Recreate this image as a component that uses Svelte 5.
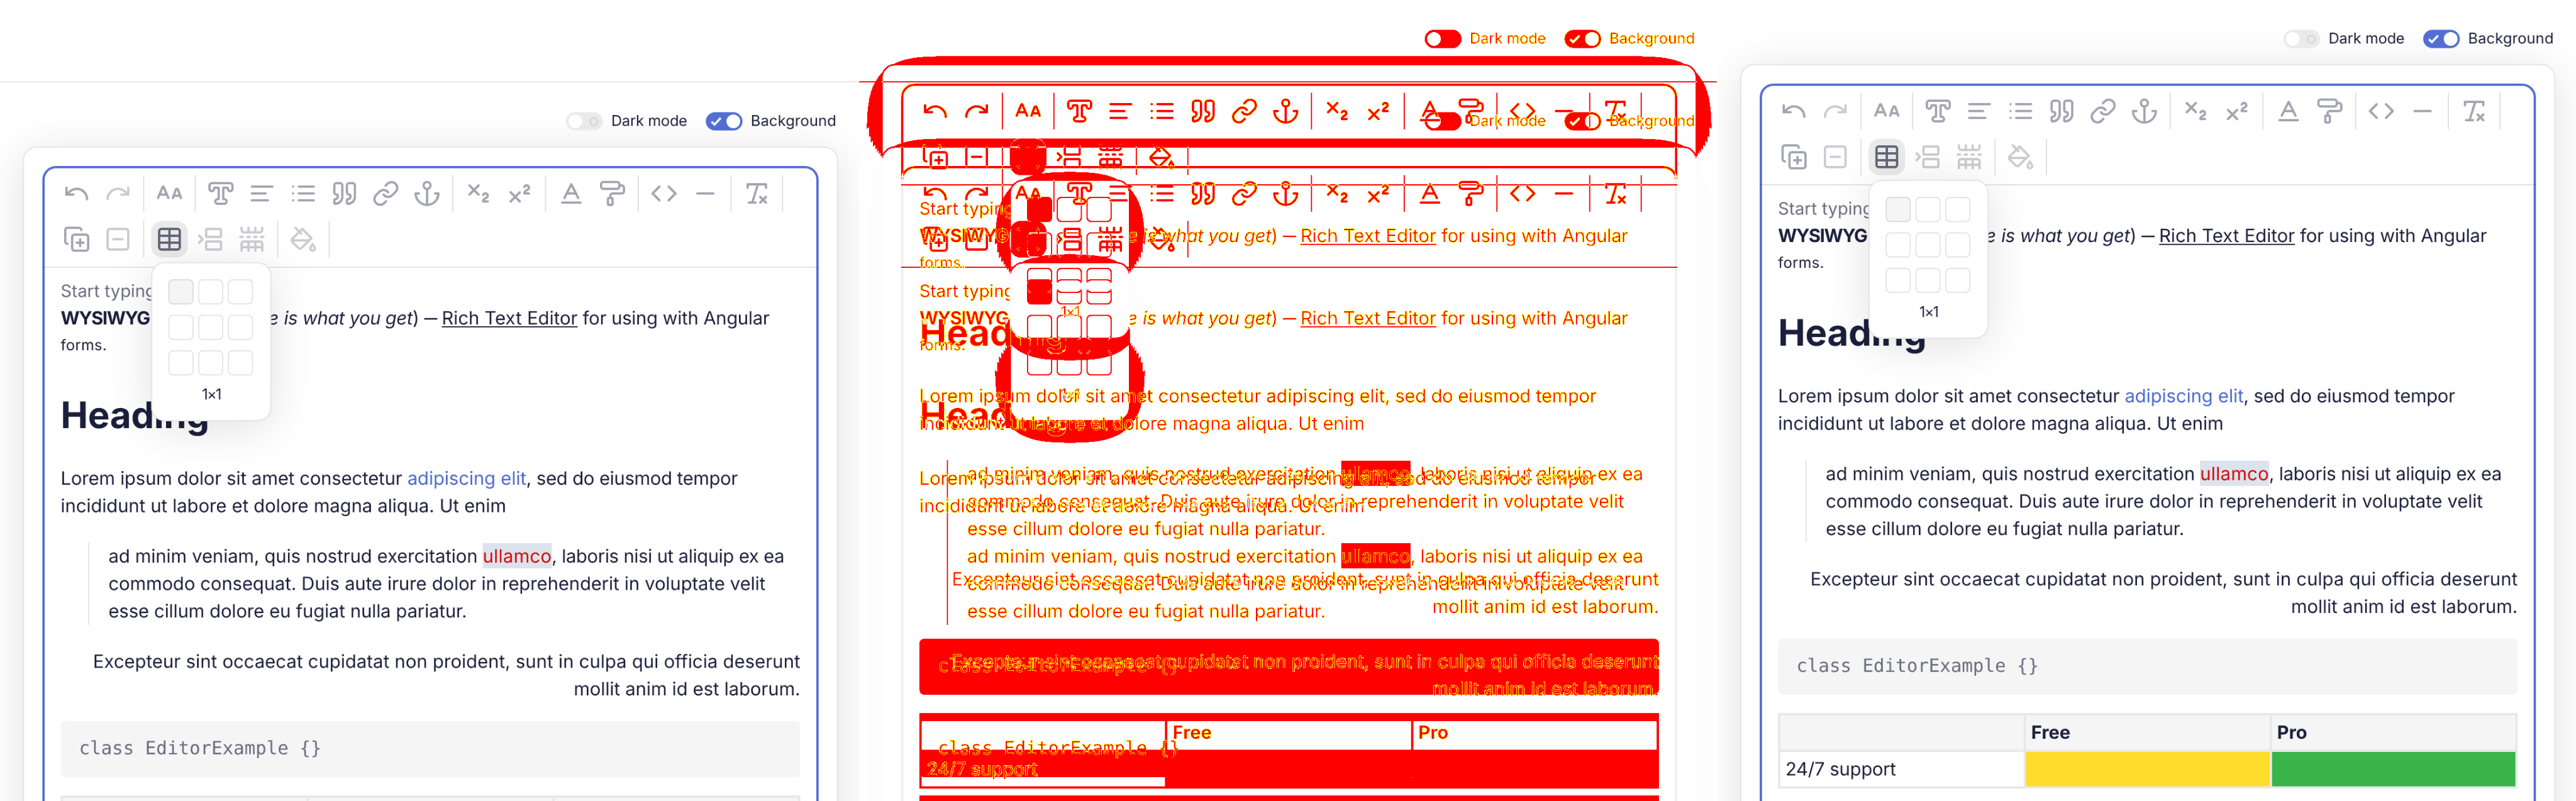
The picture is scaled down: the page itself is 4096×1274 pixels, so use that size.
<script>
  const icons = {
    undo: ['M3 7v6h6', 'M21 17a9 9 0 0 0-9-9 9 9 0 0 0-6 2.3L3 13'],
    redo: ['M21 7v6h-6', 'M3 17a9 9 0 0 1 9-9 9 9 0 0 1 6 2.3l3 2.7'],
    size: ['m15 16 2.536-7.328a1.02 1.02 1 0 1 1.928 0L22 16', 'M15.697 14h5.606', 'm2 16 4.039-9.69a.5.5 0 0 1 .923 0L11 16', 'M3.304 13h6.392'],
    type: ['M14 16.5a.5.5 0 0 0 .5.5h.5a2 2 0 0 1 0 4H9a2 2 0 0 1 0-4h.5a.5.5 0 0 0 .5-.5v-9a.5.5 0 0 0-.5-.5h-3a.5.5 0 0 0-.5.5V8a2 2 0 0 1-4 0V5a2 2 0 0 1 2-2h16a2 2 0 0 1 2 2v3a2 2 0 0 1-4 0v-.5a.5.5 0 0 0-.5-.5h-3a.5.5 0 0 0-.5.5Z'],
    align: ['M21 6H3', 'M15 12H3', 'M17 18H3'],
    list: ['M3 12h.01', 'M3 18h.01', 'M3 6h.01', 'M8 12h13', 'M8 18h13', 'M8 6h13'],
    quote: [
      'M16 3a2 2 0 0 0-2 2v6a2 2 0 0 0 2 2 1 1 0 0 1 1 1v1a2 2 0 0 1-2 2 1 1 0 0 0-1 1v2a1 1 0 0 0 1 1 6 6 0 0 0 6-6V5a2 2 0 0 0-2-2z',
      'M5 3a2 2 0 0 0-2 2v6a2 2 0 0 0 2 2 1 1 0 0 1 1 1v1a2 2 0 0 1-2 2 1 1 0 0 0-1 1v2a1 1 0 0 0 1 1 6 6 0 0 0 6-6V5a2 2 0 0 0-2-2z'
    ],
    link: ['M10 13a5 5 0 0 0 7.54.54l3-3a5 5 0 0 0-7.07-7.07l-1.72 1.71', 'M14 11a5 5 0 0 0-7.54-.54l-3 3a5 5 0 0 0 7.07 7.07l1.71-1.71'],
    anchor: ['M12 22V8', 'M5 12H2a10 10 0 0 0 20 0h-3', 'M15 5a3 3 0 1 1-6 0a3 3 0 0 1 6 0'],
    sub: ['m4 5 8 8', 'm12 5-8 8', 'M20 19h-4c0-1.5.44-2 1.5-2.5S20 15.33 20 14c0-.47-.17-.93-.48-1.29a2.11 2.11 0 0 0-2.62-.44c-.42.24-.74.62-.9 1.07'],
    sup: ['m4 19 8-8', 'm12 19-8-8', 'M20 12h-4c0-1.5.442-2 1.5-2.5S20 8.334 20 7.002c0-.472-.17-.93-.484-1.29a2.105 2.105 0 0 0-2.617-.436c-.42.239-.738.614-.899 1.06'],
    color: ['M4 20h16', 'm6 16 6-12 6 12', 'M8 12h8'],
    roller: ['M4 2h12a2 2 0 0 1 2 2v2a2 2 0 0 1-2 2H4a2 2 0 0 1-2-2V4a2 2 0 0 1 2-2Z', 'M10 16v-2a2 2 0 0 1 2-2h8a2 2 0 0 0 2-2V7a2 2 0 0 0-2-2h-2', 'M9 16h2a1 1 0 0 1 1 1v4a1 1 0 0 1-1 1H9a1 1 0 0 1-1-1v-4a1 1 0 0 1 1-1Z'],
    code: ['m16 18 6-6-6-6', 'm8 6-6 6 6 6'],
    rule: ['M5 12h14'],
    clear: ['M4 7V4h16v3', 'M5 20h6', 'M13 4 8 20', 'm15 15 5 5', 'm20 15-5 5'],
    copy: ['M15 12v6', 'M12 15h6', 'M10 8h10a2 2 0 0 1 2 2v10a2 2 0 0 1-2 2H10a2 2 0 0 1-2-2V10a2 2 0 0 1 2-2Z', 'M4 16c-1.1 0-2-.9-2-2V4c0-1.1.9-2 2-2h10c1.1 0 2 .9 2 2'],
    collapse: ['M5 3h14a2 2 0 0 1 2 2v14a2 2 0 0 1-2 2H5a2 2 0 0 1-2-2V5a2 2 0 0 1 2-2Z', 'M8 12h8'],
    table: ['M12 3v18', 'M5 3h14a2 2 0 0 1 2 2v14a2 2 0 0 1-2 2H5a2 2 0 0 1-2-2V5a2 2 0 0 1 2-2Z', 'M3 9h18', 'M3 15h18'],
    between: ['M9 3h11a1 1 0 0 1 1 1v5a1 1 0 0 1-1 1H9a1 1 0 0 1-1-1V4a1 1 0 0 1 1-1Z', 'm2 9 3 3-3 3', 'M9 14h11a1 1 0 0 1 1 1v5a1 1 0 0 1-1 1H9a1 1 0 0 1-1-1v-5a1 1 0 0 1 1-1Z'],
    split: ['M14 10h2', 'M15 22v-8', 'M15 2v4', 'M2 10h2', 'M20 10h2', 'M3 19h18', 'M3 22v-6a2 2 135 0 1 2-2h14a2 2 45 0 1 2 2v6', 'M3 2v2a2 2 45 0 0 2 2h14a2 2 135 0 0 2-2V2', 'M8 10h2', 'M9 22v-8', 'M9 2v4'],
    bucket: ['m19 11-8-8-8.6 8.6a2 2 0 0 0 0 2.8l5.2 5.2c.8.8 2 .8 2.8 0L19 11Z', 'm5 2 5 5', 'M2 13h15', 'M22 20a2 2 0 1 1-4 0c0-1.6 1.7-2.4 2-4 .3 1.6 2 2.4 2 4Z']
  };

  const toolbar = [
    [['undo', 'redo'], ['size'], ['type', 'align', 'list', 'quote', 'link', 'anchor'], ['sub', 'sup'], ['color', 'roller'], ['code', 'rule'], ['clear']],
    [['copy', 'collapse'], ['table', 'between', 'split'], ['bucket']]
  ];
  const disabled = ['redo', 'collapse', 'between', 'split', 'bucket'];
</script>

{#snippet page(scrolled)}
  <div class="page" class:scrolled>
    <div class="header"></div>
    <div class="settings">
      <div class="option">
        <span class="switch"><span class="knob"></span><span class="ring"></span></span>
        <span class="label dark">Dark mode</span>
      </div>
      <div class="option">
        <span class="switch on">
          <svg class="check" viewBox="0 0 20 16"><path d="M2 8.6 7.2 13.6 18 2" /></svg>
          <span class="knob"></span>
        </span>
        <span class="label bg">Background</span>
      </div>
    </div>
    <div class="card">
      <div class="editor">
        <div class="toolbar">
          {#each toolbar as row}
            <div class="tools">
              {#each row as group}
                <div class="group">
                  {#each group as name}
                    <div class="tool" class:disabled={disabled.includes(name)} class:active={name === 'table'}>
                      <svg class="icon" viewBox="0 0 24 24">
                        {#each icons[name] as d}<path {d} />{/each}
                      </svg>
                      {#if name === 'table'}
                        <div class="picker">
                          <div class="cells">
                            {#each Array(9) as _, i}<span class="cell" class:selected={i === 0}></span>{/each}
                          </div>
                          <div class="dims">1×1</div>
                        </div>
                      {/if}
                    </div>
                  {/each}
                </div>
                <span class="sep"></span>
              {/each}
            </div>
          {/each}
        </div>
        <div class="content">
          <div class="start">Start typing</div>
          <div class="intro"><span class="lead"><b>WYSIWYG</b><span>(<i>what you see&nbsp;</i></span></span><i class="get">is what you get</i><span class="paren">)</span><span class="dash">—</span><u>Rich Text Editor</u><span class="tail">&nbsp;for using with Angular</span></div>
          <div class="forms">forms.</div>
          <h1>Heading</h1>
          <p class="lorem"><span class="l1">Lorem ipsum dolor sit amet consectetur&nbsp;</span><a href="#elit">adipiscing elit</a><span class="l2">, sed do eiusmod tempor</span><br />incididunt ut labore et dolore magna aliqua. Ut enim</p>
          <blockquote>ad minim veniam, quis nostrud exercitation <mark>ullamco</mark><span class="l3">, laboris nisi ut aliquip ex ea</span><br />commodo consequat. Duis aute irure dolor in reprehenderit in voluptate velit<br /><span class="l4">esse cillum dolore eu fugiat nulla pariatur.</span></blockquote>
          <p class="right"><span class="l5">Excepteur sint occaecat cupidatat non proident, sunt in culpa qui officia deserunt</span><br />mollit anim id est laborum.</p>
          <pre>class EditorExample {'{}'}</pre>
          <div class="table">
            <div class="th"></div>
            <div class="th">Free</div>
            <div class="th">Pro</div>
            <div class="td">24/7 support</div>
            <div class="td yellow"></div>
            <div class="td green"></div>
          </div>
        </div>
      </div>
    </div>
  </div>
{/snippet}

<svg class="defs" aria-hidden="true">
  <!-- Turns the luminance of a difference image into a red change mask; pixels between a
       brighter and a darker neighbour (antialiased edges) become yellow. -->
  <filter id="changes" x="0" y="0" width="1" height="1" color-interpolation-filters="sRGB">
    <feColorMatrix in="SourceGraphic" type="matrix" values="0 0 0 0 0  0 0 0 0 0  0 0 0 0 0  0.299 0.587 0.114 0 0" result="delta" />
    <feComponentTransfer in="delta" result="mask"><feFuncA type="linear" slope="255" intercept="-7" /></feComponentTransfer>
    <feMorphology in="delta" operator="dilate" radius="1.2" result="wide" />
    <feMorphology in="delta" operator="erode" radius="1.2" result="thin" />
    <feComposite in="wide" in2="delta" operator="arithmetic" k1="0" k2="1" k3="-1" k4="0" result="rise" />
    <feComposite in="delta" in2="thin" operator="arithmetic" k1="0" k2="1" k3="-1" k4="0" result="fall" />
    <feComponentTransfer in="rise" result="riseEdge"><feFuncA type="linear" slope="20" intercept="-1.2" /></feComponentTransfer>
    <feComponentTransfer in="fall" result="fallEdge"><feFuncA type="linear" slope="60" intercept="-1" /></feComponentTransfer>
    <feFlood flood-color="#ff0000" /><feComposite in2="mask" operator="in" result="red" />
    <feFlood flood-color="#ffff00" /><feComposite in2="riseEdge" operator="in" /><feComposite in2="fallEdge" operator="in" /><feComposite in2="mask" operator="in" result="yellow" />
    <feMerge><feMergeNode in="red" /><feMergeNode in="yellow" /></feMerge>
  </filter>
</svg>

<div class="window">
  <div class="stage">
    <div class="panel">{@render page(false)}</div>
    <div class="panel">
      <div class="layer faint">{@render page(false)}</div>
      <div class="layer diff">
        <div class="layer base">{@render page(false)}</div>
        <div class="layer over">{@render page(true)}</div>
      </div>
    </div>
    <div class="panel">{@render page(true)}</div>
  </div>
</div>

<style>
  :global(body) { overflow: hidden; background: #fff; }
  .defs { position: absolute; width: 0; height: 0; }
  .window { width: 4096px; height: 1274px; overflow: hidden; }
  .stage {
    display: flex;
    width: 4500px;
    height: 1400px;
    transform: scale(0.910222);
    transform-origin: 0 0;
    will-change: transform;
    font-family: Inter, 'Liberation Sans', sans-serif;
    text-rendering: geometricPrecision;
    color: #1b1f3b;
  }
  .panel { position: relative; flex: none; width: 1500px; height: 1400px; overflow: hidden; background: #fff; }
  .layer { position: absolute; inset: 0; overflow: hidden; background: #fff; }
  .faint { filter: grayscale(1); opacity: 0.1; }
  .diff { filter: url(#changes); clip-path: inset(0 1px); }
  .base { isolation: isolate; }
  .over { mix-blend-mode: difference; }

  .page { width: 1500px; box-sizing: border-box; }
  .page.scrolled { margin-top: -144px; }
  .header { height: 142px; border-bottom: 2px solid #e4e4e4; }
  .settings { position: relative; z-index: 1; display: flex; justify-content: flex-end; gap: 32px; padding: 52px 39px 28px 0; height: 32px; }
  .option { display: flex; gap: 15px; }
  .switch { position: relative; display: flex; align-items: center; justify-content: space-between; box-sizing: border-box; width: 64px; height: 32px; padding: 4px; border-radius: 16px; background: #eaeaea; }
  .switch.on { background: #526ed3; }
  .knob { width: 24px; height: 24px; border-radius: 50%; background: #fff; }
  .ring { width: 11px; height: 11px; margin-right: 4px; border: 2px solid #d0d0d0; border-radius: 50%; }
  .check { width: 20px; height: 16px; margin-left: 4px; fill: none; stroke: #fff; stroke-width: 3.6; }
  .label { font-size: 26px; line-height: 32px; white-space: nowrap; }
  .dark { letter-spacing: -0.2px; }
  .bg { letter-spacing: 0.17px; }

  .card { box-sizing: border-box; width: 1424px; height: 1700px; margin-left: 40px; padding: 32px; border: 2px solid #e4e4e4; border-radius: 24px; background: #fff; box-shadow: 0 12px 80px rgba(0, 0, 0, 0.12); }
  .editor { box-sizing: border-box; height: 1600px; border: 4px solid #526ed3; border-radius: 24px; }
  .toolbar { display: flex; flex-direction: column; gap: 16px; margin: 0 -4px; padding: 12px 28px 16px; border-bottom: 2px solid rgba(0, 0, 0, 0.11); }
  .tools { display: flex; height: 64px; }
  .group { display: flex; gap: 8px; }
  .sep { flex: none; width: 2px; margin: 0 12px; background: #dfdfdf; }
  .tool { position: relative; display: flex; align-items: center; justify-content: center; width: 64px; height: 64px; border-radius: 20px; color: #a4a4b1; }
  .tool.disabled { color: #cbcbd2; }
  .tool.active { color: #636479; background: #eaeaea; }
  .icon { width: 48px; height: 48px; fill: none; stroke: currentColor; stroke-width: 2; stroke-linecap: round; stroke-linejoin: round; }
  .picker { position: absolute; z-index: 2; top: 72px; left: 0; box-sizing: border-box; width: 210px; height: 278px; padding: 28px; border: 2px solid #e4e4e4; border-radius: 24px; background: #fff; color: #1b1f3b; box-shadow: 0 12px 80px rgba(0, 0, 0, 0.12); }
  .cells { display: grid; grid-template-columns: repeat(3, 44px); gap: 18px 8px; }
  .cell { box-sizing: border-box; height: 44px; border: 2px solid #e4e4e4; border-radius: 8px; }
  .cell.selected { border-color: #dbdbdb; background: #f5f5f5; }
  .dims { margin-top: 18px; font-size: 26px; line-height: 32px; letter-spacing: -2px; text-align: center; }

  .content { padding: 17px 28px 0; font-size: 32px; line-height: 48px; white-space: nowrap; }
  .start { height: 47px; font-size: 30px; color: #6b6c80; letter-spacing: 0.1px; }
  .intro { display: flex; height: 48px; white-space: pre; }
  .lead { display: flex; justify-content: space-between; width: 390px; }
  .lead b { letter-spacing: -1.5px; }
  .get { letter-spacing: -0.42px; }
  .paren { width: 20px; }
  .dash { width: 28px; transform: scaleX(0.72); transform-origin: 0 0; }
  u { margin-left: 3px; letter-spacing: 0.08px; text-decoration-thickness: 2px; text-underline-offset: 3px; text-decoration-skip-ink: none; }
  .tail { letter-spacing: -0.25px; }
  .forms { height: 48px; font-size: 26px; letter-spacing: 0.35px; }
  h1 { margin: 50px 0 38px; font-size: 64px; line-height: 96px; font-weight: 700; letter-spacing: -0.28px; }
  p { margin: 0; }
  a { color: #4d69cd; text-decoration: none; }
  .l1 { letter-spacing: -0.09px; }
  .l2 { letter-spacing: -0.28px; }
  .l3 { letter-spacing: -0.35px; }
  .l4 { letter-spacing: -0.08px; }
  .l5 { letter-spacing: 0.11px; }
  blockquote { margin: 40px 0 40px 48px; padding-left: 33.5px; border-left: 2px solid #e4e4e4; letter-spacing: -0.025px; }
  mark { padding: 3px 0 2px; background: #dde3ed; color: #d20a0a; letter-spacing: 0.37px; }
  .right { text-align: right; }
  pre { margin: 32px 0; padding: 28px 32px 32px; border-radius: 8px; background: #f5f5f5; color: #6b6c80; font: 32px/38px 'DejaVu Sans Mono', monospace; }
  .table { display: grid; grid-template-columns: repeat(3, 1fr); gap: 4px; padding: 4px; background: #e8e8e7; }
  .th, .td { box-sizing: border-box; height: 60px; padding: 6px 9px; background: #f5f5f5; }
  .th { font-weight: 700; }
  .td { background: #fff; letter-spacing: -0.2px; }
  .td.yellow { background: #ffdd2b; }
  .td.green { background: #39b54a; }
</style>
